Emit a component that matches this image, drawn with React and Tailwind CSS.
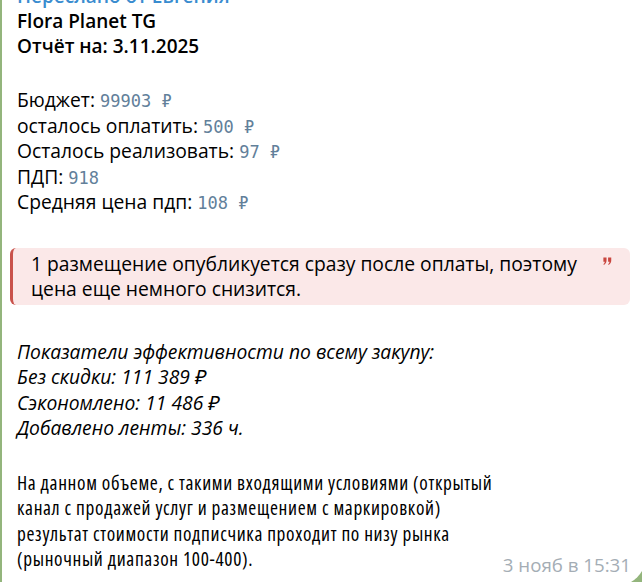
import React from 'react';

const stats = [
  { label: 'Бюджет:', value: '99903 ₽' },
  { label: 'осталось оплатить:', value: '500 ₽' },
  { label: 'Осталось реализовать:', value: '97 ₽' },
  { label: 'ПДП:', value: '918' },
  { label: 'Средняя цена пдп:', value: '108 ₽' },
];

const QuoteMark = () => (
  <svg width="9" height="9" viewBox="0 0 12 12" className="text-[#c9463f]">
    <path
      fill="currentColor"
      d="M0.5 0.5h4.2v4.3c0 2.6-1.2 4.6-3.4 5.7L0.5 9.3c1.2-0.7 1.8-1.7 1.8-3.1H0.5z M6.8 0.5h4.2v4.3c0 2.6-1.2 4.6-3.4 5.7L6.8 9.3c1.2-0.7 1.8-1.7 1.8-3.1H6.8z"
    />
  </svg>
);

export default function App() {
  return (
    <div className="w-[642px] h-[582px] overflow-hidden bg-[#93b57c]">
      <div
        className="ml-[2px] -mt-[16px] w-[644px] h-[602px] bg-white rounded-br-[30px] pl-[15px] pr-[20px] text-black text-[19.3px] leading-[25.5px]"
        style={{ fontFamily: '"Open Sans", "Noto Sans", sans-serif' }}
      >
        <div className="text-[#3a8ccf] font-semibold text-[19px] leading-[25px]">Переслано от Евгения</div>
        <div className="font-semibold text-[19px] leading-[25px]">Flora Planet TG</div>
        <div className="font-semibold text-[19px] leading-[25px]">Отчёт на: 3.11.2025</div>

        <div className="mt-[28px]">
          {stats.map((s) => (
            <div key={s.label} className="h-[25.5px]">
              {s.label}{' '}
              <span
                className="text-[#62809a] text-[17px] leading-none"
                style={{ fontFamily: '"DejaVu Sans Mono", "Liberation Mono", monospace' }}
              >
                {s.value}
              </span>
            </div>
          ))}
        </div>

        <div className="mt-[33px] -ml-[7px] w-[620px] flex rounded-[6px] bg-[#fbe8e8] border-l-[3px] border-[#c9524b] pl-[18px] pr-[15px] pt-[3px] pb-[3px]">
          <div className="flex-1">
            1 размещение опубликуется сразу после оплаты, поэтому
            <br />
            цена еще немного снизится.
          </div>
          <div className="pt-[6px] pr-[3px]">
            <QuoteMark />
          </div>
        </div>

        <div className="mt-[34px] italic">
          <div>Показатели эффективности по всему закупу:</div>
          <div>Без скидки: 111 389 ₽</div>
          <div>Сэкономлено: 11 486 ₽</div>
          <div>Добавлено ленты: 336 ч.</div>
        </div>

        <div className="mt-[29px] flex items-end">
          <div className="flex-1 font-stretch-condensed tracking-[0.65px] whitespace-nowrap">
            На данном объеме, с такими входящими условиями (открытый
            <br />
            канал с продажей услуг и размещением с маркировкой)
            <br />
            результат стоимости подписчика проходит по низу рынка
            <br />
            (рыночный диапазон 100-400).
          </div>
          <div className="text-[#a4adb5] text-[18.7px] leading-[22px] mb-[-4px] mr-[-5px] whitespace-nowrap">3 нояб в 15:31</div>
        </div>
      </div>
    </div>
  );
}
